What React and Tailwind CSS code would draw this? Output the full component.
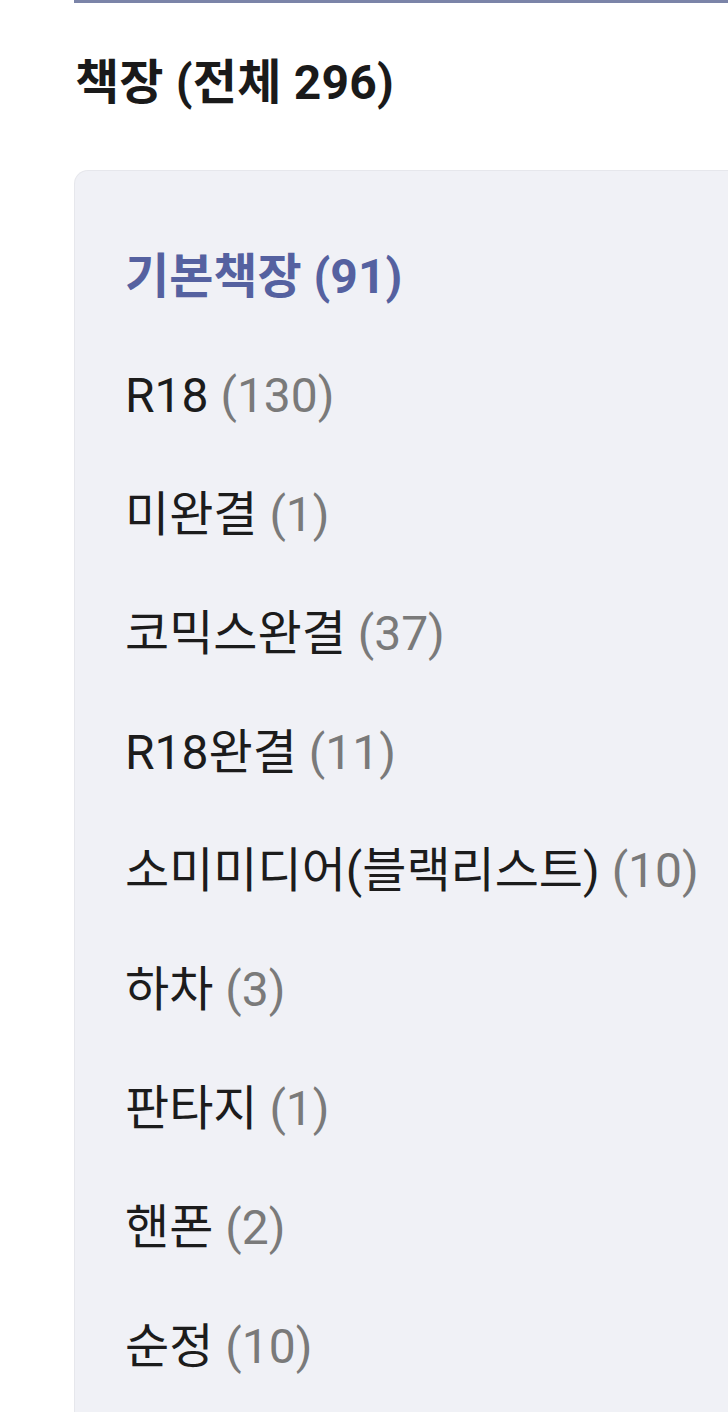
import React from 'react';

const shelves = [
  { name: '기본책장', count: 91, active: true },
  { name: 'R18', count: 130 },
  { name: '미완결', count: 1 },
  { name: '코믹스완결', count: 37 },
  { name: 'R18완결', count: 11 },
  { name: '소미미디어(블랙리스트)', count: 10 },
  { name: '하차', count: 3 },
  { name: '판타지', count: 1 },
  { name: '핸폰', count: 2 },
  { name: '순정', count: 10 },
];

const font = { fontFamily: 'Roboto, "Noto Sans CJK KR", sans-serif' };

const App = () => {
  return (
    <div className="min-h-screen bg-white overflow-hidden" style={font}>
      <div className="ml-[74px] h-[3px] bg-[#7b84a8]" />
      <h1 className="ml-[75px] mt-[52px] text-[48px] leading-[56px] font-bold text-[#1a1a1a] tracking-[0.2px]">
        책장 (전체 296)
      </h1>
      <div className="ml-[74px] mt-[59px] rounded-tl-[14px] border-l border-t border-[#e6e7ec] bg-[#f0f1f6] pt-[47px] pb-10 pl-[50px]">
        {shelves.map((s) => (
          <div key={s.name} className="h-[118.8px] flex items-center text-[48px] whitespace-nowrap">
            {s.active ? (
              <span className="font-bold text-[#5561a0]">{s.name} ({s.count})</span>
            ) : (
              <span className="text-[#1c1c1c]">
                {s.name} <span className="text-[#7a7a7a]">({s.count})</span>
              </span>
            )}
          </div>
        ))}
      </div>
    </div>
  );
};

export default App;
